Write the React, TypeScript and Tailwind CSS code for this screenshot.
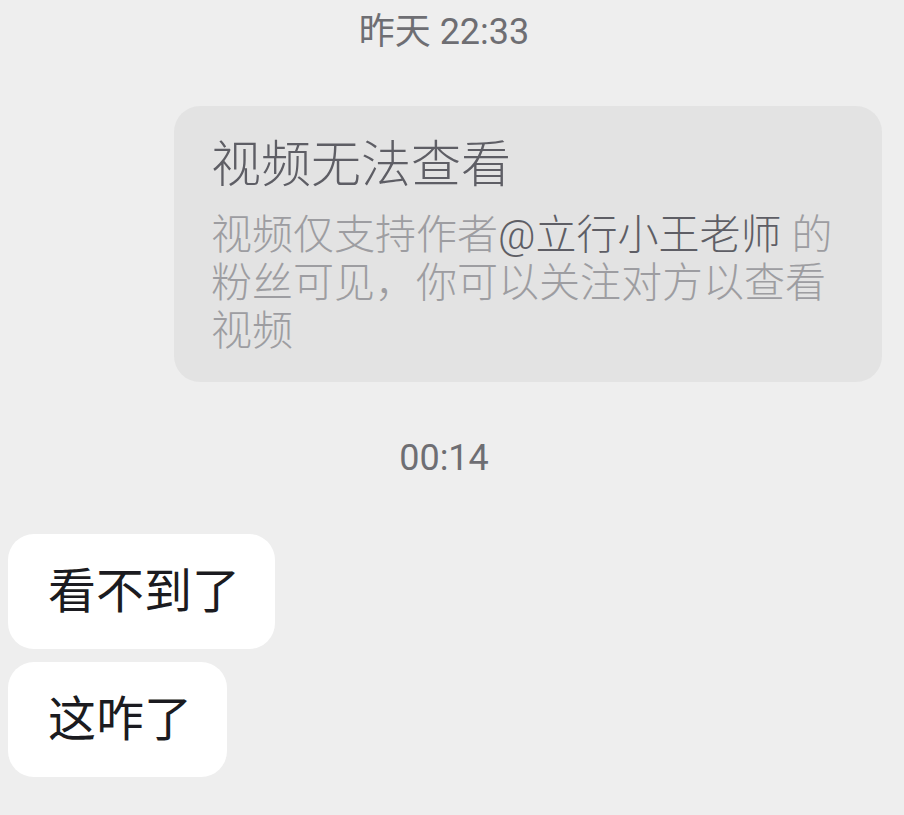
const cjk = "font-['Roboto','Noto_Sans_CJK_SC',sans-serif]";

function Stamp({ children }: { children: React.ReactNode }) {
  return (
    <div className={`${cjk} pr-[16px] text-center text-[36px] leading-[44px] text-[#6e6e73]`}>
      {children}
    </div>
  );
}

function Bubble({ text }: { text: string }) {
  return (
    <div className="flex h-[115px] w-fit items-center rounded-[26px] bg-white pl-[40px] pr-[35px]">
      <span className={`${cjk} text-[48px] leading-[56px] text-[#1b1b20]`}>{text}</span>
    </div>
  );
}

export default function App() {
  return (
    <div className="min-h-[815px] bg-[#eeeeee] pt-[10px]">
      <Stamp>昨天 22:33</Stamp>

      <div className="ml-auto mr-[22px] mt-[52px] w-[708px] rounded-[26px] bg-[#e3e3e3] pb-[27px] pl-[37px] pr-[36px] pt-[30px]">
        <div className={`${cjk} text-[50px] font-light leading-[58px] text-[#5e5e65]`}>视频无法查看</div>
        <p className={`${cjk} mt-[17px] text-[41px] font-light leading-[48px] text-[#9d9da1]`}>
          视频仅支持作者<span className="text-[#5e5e65]">@立行小王老师</span> 的粉丝可见，你可以关注对方以查看视频
        </p>
      </div>

      <div className="mt-[54px]">
        <Stamp>00:14</Stamp>
      </div>

      <div className="ml-[8px] mt-[54px] flex flex-col gap-[13px]">
        <Bubble text="看不到了" />
        <Bubble text="这咋了" />
      </div>
    </div>
  );
}
